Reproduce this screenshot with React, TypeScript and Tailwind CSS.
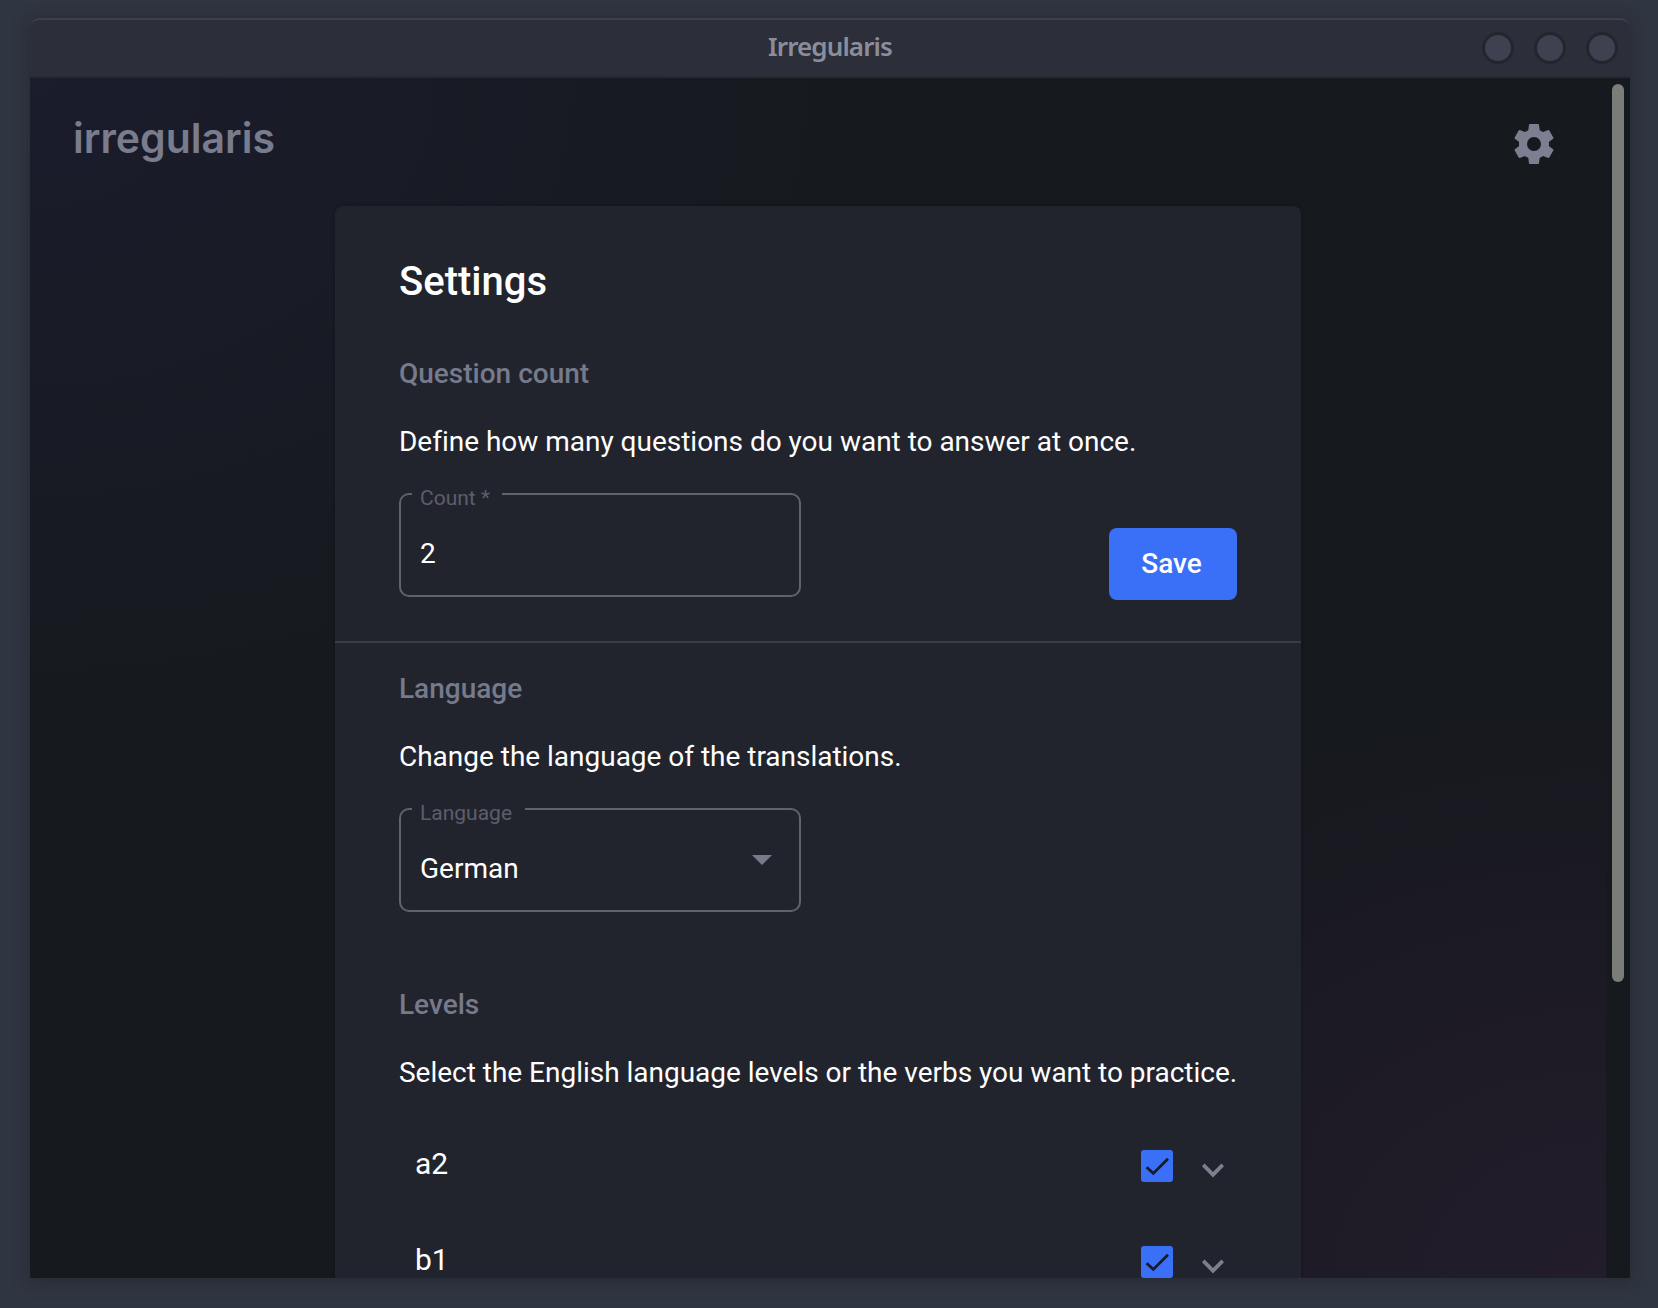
import React from "react";

const cog =
  "M12,15.5A3.5,3.5 0 0,1 8.5,12A3.5,3.5 0 0,1 12,8.5A3.5,3.5 0 0,1 15.5,12A3.5,3.5 0 0,1 12,15.5M19.43,12.97C19.47,12.65 19.5,12.33 19.5,12C19.5,11.67 19.47,11.34 19.43,11L21.54,9.37C21.73,9.22 21.78,8.95 21.66,8.73L19.66,5.27C19.54,5.05 19.27,4.96 19.05,5.05L16.56,6.05C16.04,5.66 15.5,5.32 14.87,5.07L14.5,2.42C14.46,2.18 14.25,2 14,2H10C9.75,2 9.54,2.18 9.5,2.42L9.13,5.07C8.5,5.32 7.96,5.66 7.44,6.05L4.95,5.05C4.73,4.96 4.46,5.05 4.34,5.27L2.34,8.73C2.21,8.95 2.27,9.22 2.46,9.37L4.57,11C4.53,11.34 4.5,11.67 4.5,12C4.5,12.33 4.53,12.65 4.57,12.97L2.46,14.63C2.27,14.78 2.21,15.05 2.34,15.27L4.34,18.73C4.46,18.95 4.73,19.03 4.95,18.95L7.44,17.94C7.96,18.34 8.5,18.68 9.13,18.93L9.5,21.58C9.54,21.82 9.75,22 10,22H14C14.25,22 14.46,21.82 14.5,21.58L14.87,18.93C15.5,18.67 16.04,18.34 16.56,17.94L19.05,18.95C19.27,19.03 19.54,18.95 19.66,18.73L21.66,15.27C21.78,15.05 21.73,14.78 21.54,14.63L19.43,12.97Z";

function WindowButton() {
  return <span className="size-8 rounded-full border-3 border-[#23262e] bg-[#3e414f]" />;
}

function TitleBar() {
  return (
    <header className="grid h-15 shrink-0 grid-cols-[1fr_auto_1fr] items-center rounded-t-[10px] border-t-2 border-b-2 border-t-[#3c404a] border-b-[#262931] bg-[#2c2f3a] px-3">
      <span />
      <h1 className="pb-[5px] font-['Noto_Sans'] text-[26px] leading-8 font-semibold tracking-[-0.9px] text-[#8b8e9a]">
        Irregularis
      </h1>
      <div className="flex justify-end gap-5">
        <WindowButton />
        <WindowButton />
        <WindowButton />
      </div>
    </header>
  );
}

function Section({ title, text, children }: { title: string; text: string; children: React.ReactNode }) {
  return (
    <section className="px-16">
      <h3 className="text-[28px] leading-11 font-medium text-[#767a8b]">{title}</h3>
      <p className="mt-6 text-[28px] leading-11 tracking-[-0.015px] whitespace-nowrap text-white">{text}</p>
      {children}
    </section>
  );
}

function OutlinedField({ label, legend, children }: { label: string; legend: string; children: React.ReactNode }) {
  return (
    <div className="relative flex h-[104px] w-[402px] items-center rounded-[10px] border-2 border-[#616369] pt-[18px] pr-6 pl-[19px] text-[28px] text-white">
      <span className={`absolute -top-[13px] left-[11px] h-8 bg-[#22242d] pl-2 text-[21px] leading-8 text-[#5c5e6b] ${legend}`}>
        {label}
      </span>
      {children}
    </div>
  );
}

function LevelRow({ name }: { name: string }) {
  return (
    <div className="flex h-24 items-center pr-[2px] pl-4">
      <span className="mb-[5px] flex-1 text-[30px] leading-8 text-white">{name}</span>
      <span className="flex size-8 items-center justify-center rounded-[3px] bg-[#3a6ff8]">
        <svg viewBox="0 0 32 32" className="size-8" fill="none" stroke="#181b24" strokeWidth="2.8">
          <path d="M5.6 17.2 L12.3 23.4 L27 8.8" />
        </svg>
      </span>
      <svg viewBox="0 0 24 24" className="mt-2 ml-[18px] size-11" fill="#7b7f90">
        <path d="M7.41 8.49 12 13.07l4.59-4.58L18 9.9l-6 6.2-6-6.2z" />
      </svg>
    </div>
  );
}

export default function App() {
  return (
    <div className="h-[1308px] w-[1658px] overflow-hidden bg-[#2f3541] pt-4.5 pr-7 pl-7.5 font-['Roboto',sans-serif]">
      <div className="flex h-[1260px] flex-col rounded-t-[10px] shadow-[0_2px_16px_rgba(30,32,40,0.55)]">
        <TitleBar />
        <div className="flex min-h-0 flex-1 bg-[#16191d]">
          <main className="flex-1 overflow-hidden bg-[radial-gradient(farthest-side_at_0%_0%,#1b1c2c,#171a22_38%,#16191d00_50%),radial-gradient(farthest-side_at_100%_100%,#231d2b,#1a1922_35%,#16191d00_50%)]">
            <div className="flex h-32 justify-between pr-12 pl-[43px]">
              <span className="pt-[34px] font-['Inter'] text-[41px] leading-[52px] font-semibold text-[#797c8c]">
                irregularis
              </span>
              <svg viewBox="0 0 24 24" className="mt-[42px] size-12" fill="#7b7f90">
                <path d={cog} />
              </svg>
            </div>
            <div className="ml-[305px] h-[1072px] w-[966px] overflow-hidden rounded-t-[8px] bg-[#22242d] shadow-[0_0_4px_rgba(0,0,0,0.2)]">
              <h2 className="px-16 pt-[44px] text-[40px] leading-16 font-medium text-white">Settings</h2>
              <div className="h-[38px]" />
              <Section title="Question count" text="Define how many questions do you want to answer at once.">
                <div className="mt-[29px] flex justify-between">
                  <OutlinedField label="Count *" legend="w-[90px]">
                    2
                  </OutlinedField>
                  <button className="mt-[35px] h-[72px] w-32 rounded-[8px] bg-[#3a6ff8] pr-[3px] text-[28px] font-medium text-white">
                    Save
                  </button>
                </div>
              </Section>
              <div className="mt-[41px] mb-[24px] h-[2px] bg-[#3a3c45]" />
              <Section title="Language" text="Change the language of the translations.">
                <div className="mt-[29px]">
                  <OutlinedField label="Language" legend="w-[113px]">
                    <span className="flex-1">German</span>
                    <svg viewBox="0 0 20 10" className="mr-[3px] mb-[18px] h-2.5 w-5" fill="#767a8b">
                      <path d="M0 0h20L10 10z" />
                    </svg>
                  </OutlinedField>
                </div>
              </Section>
              <div className="h-[71px]" />
              <Section title="Levels" text="Select the English language levels or the verbs you want to practice.">
                <div className="mt-[23px]">
                  <LevelRow name="a2" />
                  <LevelRow name="b1" />
                </div>
              </Section>
            </div>
          </main>
          <aside className="flex w-6 justify-center bg-[#16191d] pt-1.5">
            <div className="h-[898px] w-3 rounded-full bg-[#7b7d79]" />
          </aside>
        </div>
      </div>
    </div>
  );
}
